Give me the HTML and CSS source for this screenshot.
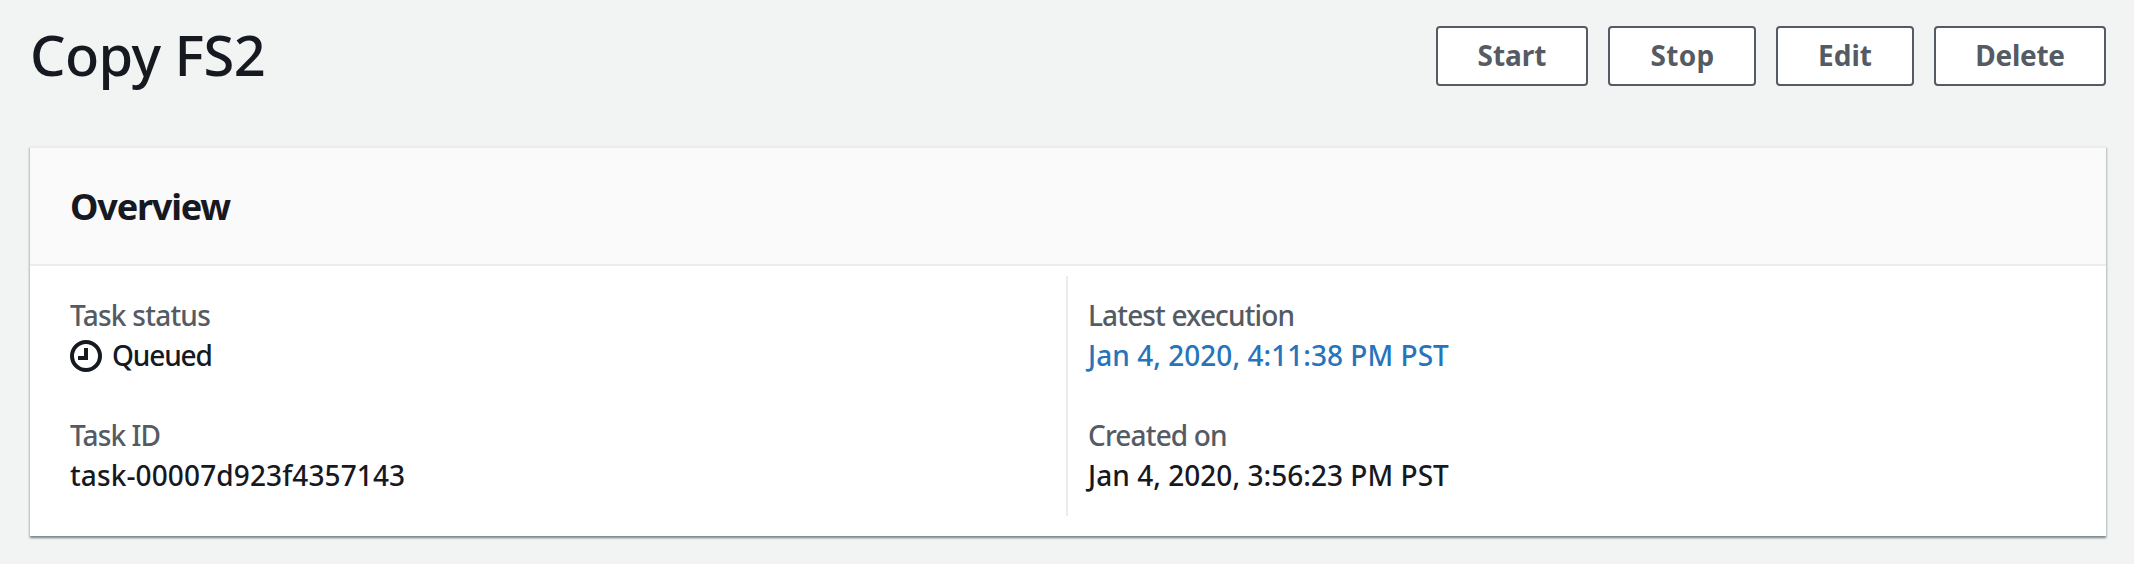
FILE: index.html
```html
<!DOCTYPE html>
<html lang="en">
<head>
<meta charset="utf-8">
<title>Copy FS2</title>
<link rel="stylesheet" href="styles.css">
</head>
<body>
<header class="page-header">
  <h1 class="page-title">Copy FS2</h1>
  <div class="actions">
    <button class="btn btn-start">Start</button>
    <button class="btn btn-stop">Stop</button>
    <button class="btn btn-edit">Edit</button>
    <button class="btn btn-delete">Delete</button>
  </div>
</header>
<section class="card">
  <div class="card-header"><h2 class="card-title">Overview</h2></div>
  <div class="card-body">
    <dl class="column">
      <div class="field">
        <dt class="label label-status">Task status</dt>
        <dd class="value status">
          <svg class="status-icon" viewBox="0 0 16 16" fill="none" stroke="currentColor" stroke-width="2"><circle cx="8" cy="8" r="7"/><path d="M8 4v5H4"/></svg>
          <span>Queued</span>
        </dd>
      </div>
      <div class="field">
        <dt class="label label-id">Task ID</dt>
        <dd class="value value-id">task-00007d923f4357143</dd>
      </div>
    </dl>
    <dl class="column column-divided">
      <div class="field">
        <dt class="label">Latest execution</dt>
        <dd class="value value-date"><a class="link" href="#">Jan 4, 2020, 4:11:38 PM PST</a></dd>
      </div>
      <div class="field">
        <dt class="label">Created on</dt>
        <dd class="value value-date">Jan 4, 2020, 3:56:23 PM PST</dd>
      </div>
    </dl>
  </div>
</section>
</body>
</html>
```
FILE: styles.css
```css
* { box-sizing: border-box; }
body {
  margin: 0;
  height: 564px;
  padding: 24px 28px 0 30px;
  background: #f2f3f3;
  color: #16191f;
  font: 500 28px/40px "Noto Sans", sans-serif;
}
.page-header {
  display: flex;
  justify-content: space-between;
  height: 122px;
}
.page-title {
  margin: 0;
  font-size: 56px;
  line-height: 60px;
  font-weight: 500;
  letter-spacing: -0.6px;
}
.actions {
  display: flex;
  gap: 20px;
  padding-top: 2px;
}
.btn {
  height: 60px;
  padding: 0 0 2px;
  border: 2px solid #545b64;
  border-radius: 4px;
  background: #fff;
  color: #545b64;
  font: 700 28px/54px "Noto Sans", sans-serif;
}
.btn-start { width: 152px; }
.btn-stop { width: 148px; padding-left: 1px; letter-spacing: 0.3px; }
.btn-edit { width: 138px; }
.btn-delete { width: 172px; letter-spacing: -0.3px; }
.card {
  height: 390px;
  border-top: 2px solid #eaeded;
  background: #fff;
  box-shadow: 0 2px 2px 0 rgba(0, 28, 36, 0.3), 1px 2px 2px 0 rgba(0, 28, 36, 0.15), -1px 2px 2px 0 rgba(0, 28, 36, 0.15);
}
.card-header {
  height: 118px;
  padding: 35px 40px 0;
  border-bottom: 2px solid #eaeded;
  background: #fafafa;
}
.card-title {
  margin: 0;
  font-size: 36px;
  line-height: 48px;
  font-weight: 700;
  letter-spacing: -1.2px;
}
.card-body {
  display: grid;
  grid-template-columns: 1036px 1fr;
  padding-top: 10px;
}
.column {
  display: flex;
  flex-direction: column;
  gap: 40px;
  height: 240px;
  margin: 0;
  padding: 19px 0 0 40px;
}
.column-divided {
  border-left: 2px solid #eaeded;
  padding-left: 20px;
}
.label { color: #545b64; letter-spacing: -0.85px; }
.label-status { letter-spacing: -0.75px; }
.label-id { letter-spacing: -0.9px; }
.value { margin: 0; }
.value-id { letter-spacing: 0.12px; }
.value-date { letter-spacing: 0.04px; }
.status {
  display: flex;
  align-items: center;
  gap: 10px;
  letter-spacing: -1.15px;
}
.status-icon { width: 32px; height: 32px; margin-top: 2px; }
.link { color: #2674bb; text-decoration: none; }
```
